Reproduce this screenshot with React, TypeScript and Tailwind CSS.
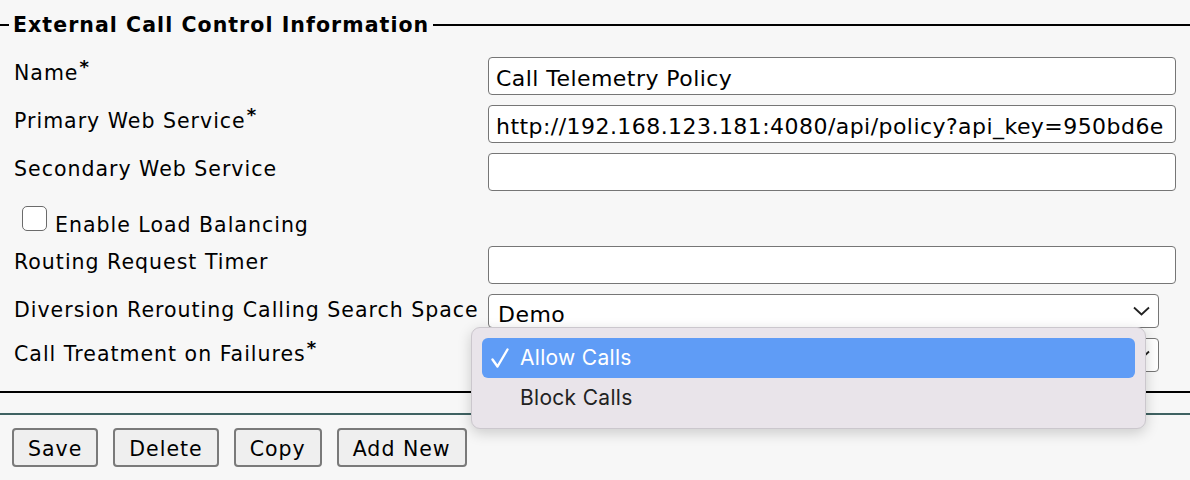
const Req = () => (
  <span className="relative top-[-7px] ml-[1px] text-[18px] font-bold tracking-normal">*</span>
);

const Field = ({ label, req, value }: { label: string; req?: boolean; value?: string }) => (
  <div className="flex h-[38px]">
    <div className="w-[488px] shrink-0 pl-[14px] pt-[4px] leading-[24px]">
      {label}
      {req && <Req />}
    </div>
    <div className="flex h-[38px] w-[688px] shrink-0 items-center overflow-hidden whitespace-nowrap rounded-[4px] border-[1.5px] border-[#767676] bg-white pl-[7px] pt-[5px] text-[22px] tracking-[0.45px]">
      {value}
    </div>
  </div>
);

const Chevron = () => (
  <svg width="17" height="10" viewBox="0 0 17 10" className="shrink-0">
    <path d="M1 1.5 L8.5 8.5 L16 1.5" fill="none" stroke="#222" strokeWidth="1.8" />
  </svg>
);

const App = () => {
  return (
    <div className="relative h-[480px] w-[1190px] overflow-hidden bg-[#f7f7f7] font-['DejaVu_Sans',Verdana,sans-serif] text-[20.5px] tracking-[1px] text-black">
      {/* legend */}
      <div className="mt-[13px] flex h-[24px] items-center">
        <div className="h-[2px] w-[9px] bg-black" />
        <span className="px-[4px] font-bold leading-[24px] tracking-[1.05px]">External Call Control Information</span>
        <div className="h-[2px] flex-1 bg-black" />
      </div>

      <div className="mt-[20px] flex flex-col gap-[10px]">
        <Field label="Name" req value="Call Telemetry Policy" />
        <Field label="Primary Web Service" req value="http://192.168.123.181:4080/api/policy?api_key=950bd6e" />
        <Field label="Secondary Web Service" />
      </div>

      <div className="mt-[15px] flex h-[25px] items-center pl-[22px]">
        <div className="h-[25px] w-[25px] rounded-[5px] border-[1.5px] border-[#6b6b6b] bg-white" />
        <span className="ml-[8px] pt-[13px] leading-[24px]">Enable Load Balancing</span>
      </div>

      <div className="mt-[15px]">
        <Field label="Routing Request Timer" />
      </div>

      <div className="mt-[10px] flex h-[34px]">
        <div className="w-[488px] shrink-0 pl-[14px] pt-[4px] leading-[24px]">Diversion Rerouting Calling Search Space</div>
        <div className="flex h-[34px] w-[671px] shrink-0 items-center justify-between rounded-[4px] border-[1.5px] border-[#767676] bg-white pl-[9px] pr-[8px] text-[22px] tracking-[0.45px]">
          <span className="pt-[6px]">Demo</span>
          <Chevron />
        </div>
      </div>

      <div className="mt-[10px] flex h-[34px]">
        <div className="w-[488px] shrink-0 pl-[14px] pt-[4px] leading-[24px]">
          Call Treatment on Failures
          <Req />
        </div>
        <div className="flex h-[34px] w-[671px] shrink-0 items-center justify-end rounded-[4px] border-[1.5px] border-[#767676] bg-white pl-[9px] pr-[8px]">
          <Chevron />
        </div>
      </div>

      <div className="mt-[19px] h-[2px] bg-black" />
      <div className="mt-[20px] h-[2px] bg-[#3f6262]" />

      <div className="ml-[12px] mt-[13px] flex gap-[15px]">
        {["Save", "Delete", "Copy", "Add New"].map((b) => (
          <button
            key={b}
            className="h-[39px] rounded-[4px] border-2 border-[#7a7a7a] bg-[#efefef] px-[14px] pt-[3px] leading-[24px]"
          >
            {b}
          </button>
        ))}
      </div>

      {/* open select menu */}
      <div className="absolute left-[471px] top-[327px] w-[675px] rounded-[9px] border border-[#cbc7cd] bg-[#e9e4ea] px-[10px] pb-[10px] pt-[10px] font-['Inter',sans-serif] text-[21px] tracking-[0.3px] shadow-[0_4px_14px_rgba(0,0,0,0.18)]">
        <div className="flex h-[40px] items-center rounded-[6px] bg-[#5f9cf6] text-white">
          <svg width="18" height="22" viewBox="0 0 18 22" className="ml-[9px]">
            <path d="M1.5 12.5 L6.5 19.5 L16.5 2.5" fill="none" stroke="#fff" strokeWidth="2.4" strokeLinecap="round" strokeLinejoin="round" />
          </svg>
          <span className="ml-[11px]">Allow Calls</span>
        </div>
        <div className="flex h-[40px] items-center pl-[38px] text-[#222]">Block Calls</div>
      </div>
    </div>
  );
};

export default App;
